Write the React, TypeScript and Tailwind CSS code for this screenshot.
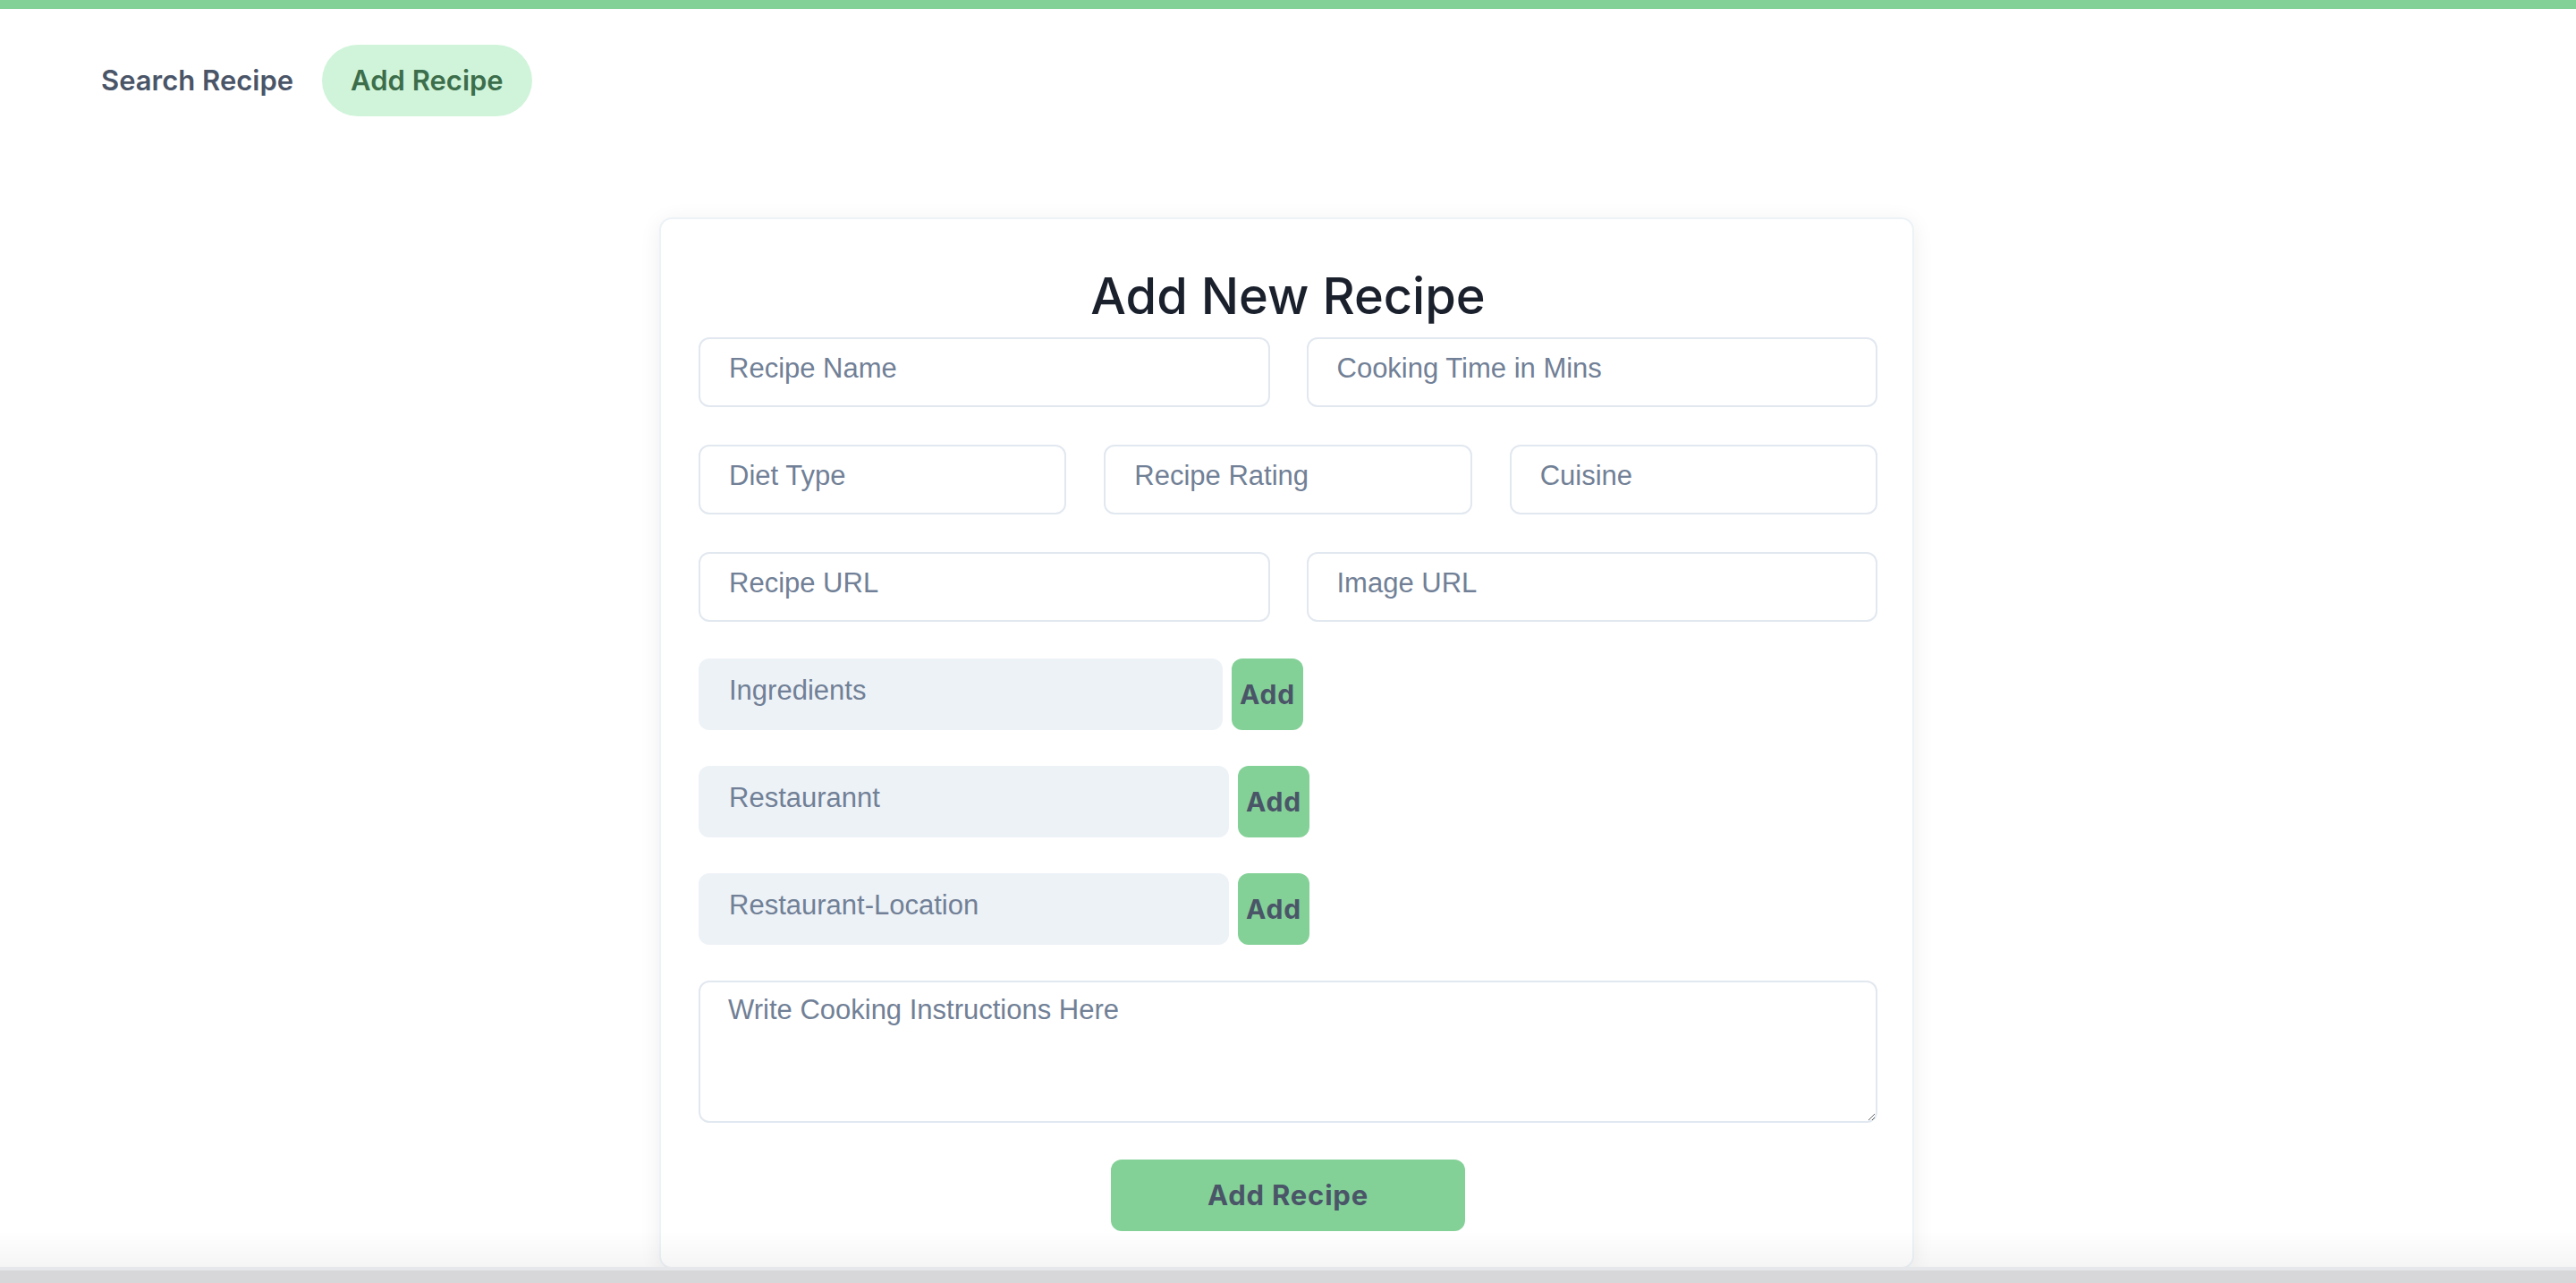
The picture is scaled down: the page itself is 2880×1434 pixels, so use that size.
import React from "react";

const inputCls =
  "h-[78px] w-full rounded-[12px] border-2 border-[#e2e8f0] bg-white pl-[32px] pb-[9px] font-['Liberation_Sans',Arial,sans-serif] text-[31px] text-[#4a5568] placeholder:text-[#718096] outline-none";

const grayCls =
  "h-[80px] rounded-[12px] bg-[#edf2f7] pl-[34px] pb-[9px] font-['Liberation_Sans',Arial,sans-serif] text-[31px] text-[#4a5568] placeholder:text-[#718096] outline-none";

function AddRow({ placeholder, width }: { placeholder: string; width: string }) {
  return (
    <div className="flex items-center gap-[10px]">
      <input placeholder={placeholder} className={`${grayCls} ${width}`} />
      <button className="flex h-[80px] w-[80px] items-center justify-center rounded-[12px] bg-[#84d198] font-['Inter',sans-serif] text-[30px] font-bold tracking-[0.8px] text-[#4a5568]">
        Add
      </button>
    </div>
  );
}

export default function App() {
  return (
    <div className="relative min-h-screen bg-white">
      <div className="h-[10px] bg-[#84d198]" />
      <nav className="flex pl-[81px] pt-[40px] font-['Inter',sans-serif]">
        <a className="flex h-[80px] items-center rounded-full px-[32px] text-[31px] font-semibold text-[#4a5568]">
          Search Recipe
        </a>
        <a className="flex h-[80px] items-center rounded-full bg-[#d0f4da] px-[32px] text-[31px] font-semibold text-[#3c6e4b]">
          Add Recipe
        </a>
      </nav>
      <div className="ml-[737px] mt-[113px] w-[1403px] rounded-[14px] border-2 border-[#edf2f7] bg-white pb-[40px] pl-[42px] pr-[39px] pt-[52px] shadow-[0_4px_24px_rgba(0,0,0,0.07)]">
        <h1 className="mb-[12px] h-[68px] text-center font-['Inter',sans-serif] text-[56px] font-medium leading-[68px] text-[#1a202c]">
          Add New Recipe
        </h1>
        <div className="flex flex-col gap-[42px]">
          <div className="grid grid-cols-2 gap-x-[41px]">
            <input placeholder="Recipe Name" className={inputCls} />
            <input placeholder="Cooking Time in Mins" className={inputCls} />
          </div>
          <div className="grid grid-cols-3 gap-x-[42px]">
            <input placeholder="Diet Type" className={inputCls} />
            <input placeholder="Recipe Rating" className={inputCls} />
            <input placeholder="Cuisine" className={inputCls} />
          </div>
          <div className="grid grid-cols-2 gap-x-[41px]">
            <input placeholder="Recipe URL" className={inputCls} />
            <input placeholder="Image URL" className={inputCls} />
          </div>
        </div>
        <div className="mt-[41px] flex flex-col gap-[40px]">
          <AddRow placeholder="Ingredients" width="w-[586px]" />
          <AddRow placeholder="Restaurannt" width="w-[593px]" />
          <AddRow placeholder="Restaurant-Location" width="w-[593px]" />
          <textarea
            placeholder="Write Cooking Instructions Here"
            className="block h-[159px] w-full rounded-[12px] border-2 border-[#e2e8f0] bg-white px-[31px] pt-[8px] font-['Liberation_Sans',Arial,sans-serif] text-[31px] text-[#4a5568] placeholder:text-[#718096] outline-none"
          />
        </div>
        <button className="mx-auto mt-[41px] flex h-[80px] w-[396px] items-center justify-center rounded-[12px] bg-[#84d198] font-['Inter',sans-serif] text-[31px] font-bold tracking-[0.8px] text-[#4a5568]">
          Add Recipe
        </button>
      </div>
      <div className="pointer-events-none fixed inset-x-0 bottom-0 flex flex-col">
        <div className="h-[40px] bg-gradient-to-b from-[rgba(0,0,0,0)] to-[rgba(0,0,0,0.04)]" />
        <div className="h-[4px] bg-[#e5e7eb]" />
        <div className="h-[14px] bg-[#d7d7d9]" />
      </div>
    </div>
  );
}
